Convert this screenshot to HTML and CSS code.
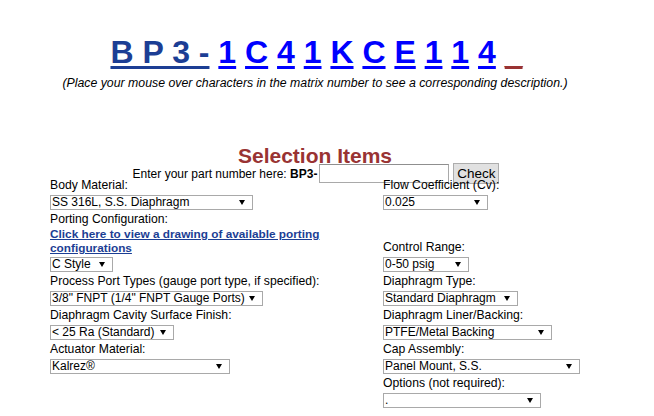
FILE: index.html
```html
<!DOCTYPE html>
<html>
<head>
<meta charset="utf-8">
<title>BP3 Selection</title>
<link rel="stylesheet" href="styles.css">
</head>
<body>
<div class="page">
  <div class="matrix">
    <a class="grp" href="#">B P 3 -</a> <a class="ch" href="#">1</a> <a class="ch" href="#">C</a> <a class="ch" href="#">4</a> <a class="ch" href="#">1</a> <a class="ch" href="#">K</a> <a class="ch" href="#">C</a> <a class="ch" href="#">E</a> <a class="ch" href="#">1</a> <a class="ch" href="#">1</a> <a class="ch" href="#">4</a> <a class="last" href="#">_</a>
  </div>
  <div class="hint">(Place your mouse over characters in the matrix number to see a corresponding description.)</div>

  <h2 class="heading">Selection Items</h2>
  <div class="enter">
    <span class="enter-text">Enter your part number here: <b>BP3-</b></span><input class="pn" type="text"><button class="check" type="button">Check</button>
  </div>

  <div class="form">
    <div class="cell">
      <div class="lbl">Body Material:</div>
      <span class="sel w-body"><select><option>SS 316L, S.S. Diaphragm</option></select></span>
    </div>
    <div class="cell">
      <div class="lbl">Flow Coefficient (Cv):</div>
      <span class="sel w-flow"><select><option>0.025</option></select></span>
    </div>

    <div class="cell">
      <div class="lbl">Porting Configuration:</div>
      <a class="drawing" href="#">Click here to view a drawing of available porting configurations</a>
      <span class="sel w-cstyle"><select><option>C Style</option></select></span>
    </div>
    <div class="cell">
      <div class="lbl">Control Range:</div>
      <span class="sel w-range"><select><option>0-50 psig</option></select></span>
    </div>

    <div class="cell">
      <div class="lbl">Process Port Types (gauge port type, if specified):</div>
      <span class="sel w-port"><select><option>3/8" FNPT (1/4" FNPT Gauge Ports)</option></select></span>
    </div>
    <div class="cell">
      <div class="lbl">Diaphragm Type:</div>
      <span class="sel w-dtype"><select><option>Standard Diaphragm</option></select></span>
    </div>

    <div class="cell">
      <div class="lbl">Diaphragm Cavity Surface Finish:</div>
      <span class="sel w-finish"><select><option>&lt; 25 Ra (Standard)</option></select></span>
    </div>
    <div class="cell">
      <div class="lbl">Diaphragm Liner/Backing:</div>
      <span class="sel w-liner"><select><option>PTFE/Metal Backing</option></select></span>
    </div>

    <div class="cell">
      <div class="lbl">Actuator Material:</div>
      <span class="sel w-act"><select><option>Kalrez®</option></select></span>
    </div>
    <div class="cell">
      <div class="lbl">Cap Assembly:</div>
      <span class="sel w-cap"><select><option>Panel Mount, S.S.</option></select></span>
    </div>

    <div class="cell"></div>
    <div class="cell">
      <div class="lbl">Options (not required):</div>
      <span class="sel w-opt"><select><option>.</option></select></span>
    </div>
  </div>
</div>
</body>
</html>
```
FILE: styles.css
```css
html, body {
  background: #ffffff;
}
body {
  margin: 8px;
  font-family: "Liberation Sans", Arial, sans-serif;
  font-size: 12px;
  color: #000000;
}
.page {
  width: 614px;
}
.matrix {
  margin-top: 26px;
  padding-left: 3px;
  text-align: center;
  font-size: 32px;
  font-weight: bold;
  line-height: 37px;
  white-space: nowrap;
}
.matrix a {
  text-decoration: underline;
  text-decoration-thickness: 3px;
  text-underline-offset: 3px;
}
.matrix .grp {
  color: #1c3e94;
}
.matrix .ch {
  color: #0000ff;
}
.matrix .last {
  color: #993333;
}
.hint {
  margin-top: 5px;
  text-align: center;
  font-style: italic;
  font-size: 12.3px;
  line-height: 14px;
}
.heading {
  margin: 58px 0 0 0;
  text-align: center;
  font-size: 21px;
  line-height: 16px;
  color: #993333;
}
.enter {
  margin-top: -1px;
  padding-left: 2px;
  height: 21px;
  display: flex;
  justify-content: center;
  align-items: center;
  line-height: 14px;
}
.pn {
  box-sizing: border-box;
  width: 130px;
  height: 19px;
  margin: 0 0 0 2px;
  padding: 0 2px;
  border: 1px solid #a9a9a9;
  border-top-color: #8f8f8f;
  font-family: inherit;
  font-size: 12px;
}
.check {
  box-sizing: border-box;
  width: 46px;
  height: 21px;
  margin: 0 0 0 4px;
  padding: 0;
  border: 1px solid #adadad;
  border-radius: 0;
  background: #e1e1e1;
  font-family: "Liberation Sans", Arial, sans-serif;
  font-size: 13.5px;
  color: #000;
}
.form {
  margin: -6px 0 0 42px;
  display: grid;
  grid-template-columns: 290px 240px;
  column-gap: 43px;
  align-items: end;
}
.cell {
  display: flex;
  flex-direction: column;
  align-items: flex-start;
  padding-bottom: 2px;
}
.lbl {
  font-size: 12.2px;
  line-height: 15px;
  white-space: nowrap;
}
.drawing {
  color: #1c3e94;
  font-weight: bold;
  font-size: 11.8px;
  line-height: 14px;
  text-decoration: underline;
}
.sel {
  position: relative;
  display: block;
  margin-top: 2px;
  height: 15px;
}
.sel::after {
  content: "";
  position: absolute;
  right: 8px;
  top: 5px;
  width: 0;
  height: 0;
  border-left: 3px solid transparent;
  border-right: 3px solid transparent;
  border-top: 5px solid #000;
  pointer-events: none;
}
.sel select {
  -webkit-appearance: none;
  appearance: none;
  box-sizing: border-box;
  display: block;
  width: 100%;
  height: 15px;
  margin: 0;
  padding: 0 1px;
  border: 1px solid #a9a9a9;
  border-radius: 0;
  background: #fff;
  font-family: "Liberation Sans", Arial, sans-serif;
  font-size: 12px;
  line-height: 13px;
  color: #000;
}
.w-body { width: 203px; }
.w-flow { width: 105px; }
.w-cstyle { width: 63px; }
.w-range { width: 86px; }
.w-port { width: 213px; }
.w-dtype { width: 135px; }
.w-finish { width: 124px; }
.w-liner { width: 169px; }
.w-act { width: 180px; }
.w-cap { width: 197px; }
.w-opt { width: 158px; }
```
